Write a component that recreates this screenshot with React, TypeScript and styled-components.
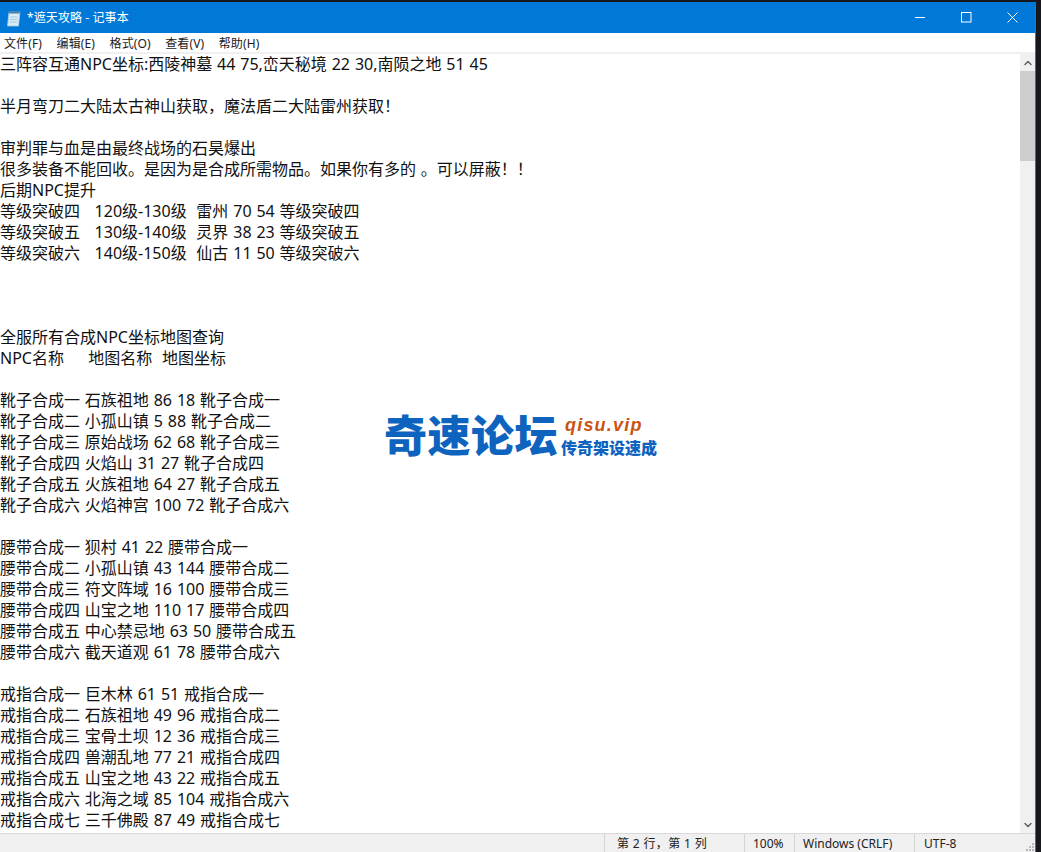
import styled, { createGlobalStyle } from 'styled-components';
import { ChevronUp, ChevronDown } from 'lucide-react';

const GlobalStyle = createGlobalStyle`
  html, body {
    margin: 0;
    height: 100%;
    overflow: hidden;
    background: #17181d;
  }
`;

const Desktop = styled.div`
  width: 1041px;
  height: 852px;
  padding: 2px 5px 0 0;
  box-sizing: border-box;
  font-family: "Noto Sans", "Noto Sans CJK SC", sans-serif;
`;

const Window = styled.div`
  display: flex;
  flex-direction: column;
  height: 100%;
  background: #fff;
  border-right: 1px solid #1a78c8;
`;

const TitleBar = styled.div`
  display: flex;
  align-items: center;
  height: 31px;
  flex: none;
  padding-left: 5px;
  background: #0078d7;
  color: #fff;
`;

const AppIcon = styled.svg`
  width: 17px;
  height: 18px;
  flex: none;
`;

const TitleText = styled.span`
  margin-left: 5px;
  padding-bottom: 2px;
  font-size: 12px;
  letter-spacing: 0.1px;
`;

const WindowControls = styled.div`
  display: flex;
  margin-left: auto;
  height: 100%;
`;

const ControlButton = styled.div`
  display: flex;
  align-items: center;
  justify-content: center;
  width: 46px;
  height: 100%;
`;

const MenuBar = styled.div`
  display: flex;
  align-items: center;
  flex: none;
  gap: 14.5px;
  height: 19px;
  padding-left: 4px;
  font-size: 12px;
  letter-spacing: 0.12px;
  color: #1a1a1a;
  border-bottom: 2px solid #f0f0f0;
`;

const EditorArea = styled.div`
  position: relative;
  display: flex;
  flex: 1;
  min-height: 0;
`;

const TextBody = styled.div`
  flex: 1;
  overflow: hidden;
  font-size: 16px;
  line-height: 21px;
  word-spacing: 0.7px;
  color: #111;
`;

const TextLine = styled.div`
  height: 21px;
  white-space: pre;
`;

const ScrollBar = styled.div`
  display: flex;
  flex-direction: column;
  width: 15px;
  flex: none;
  background: #f0f0f0;
`;

const ScrollArrow = styled.div`
  display: flex;
  align-items: center;
  justify-content: center;
  height: 17px;
  flex: none;
  color: #606060;
`;

const ScrollThumb = styled.div`
  height: 90px;
  flex: none;
  background: #cdcdcd;
`;

const ScrollSpace = styled.div`
  flex: 1;
`;

const Watermark = styled.div`
  position: absolute;
  left: 384px;
  top: 356px;
  display: flex;
  align-items: center;
  gap: 3px;
`;

const WatermarkTitle = styled.div`
  font-family: "Noto Sans CJK SC", sans-serif;
  font-size: 43px;
  line-height: 46px;
  font-weight: 900;
  letter-spacing: 0.5px;
  color: #0d63bd;
`;

const WatermarkSide = styled.div`
  display: flex;
  flex-direction: column;
  gap: 4px;
  padding-top: 4px;
`;

const WatermarkDomain = styled.div`
  padding-left: 4px;
  font-family: "Liberation Sans", sans-serif;
  font-size: 18px;
  line-height: 20px;
  font-weight: 700;
  font-style: italic;
  letter-spacing: 1.2px;
  color: #c9540f;
`;

const WatermarkSlogan = styled.div`
  font-family: "Noto Sans CJK SC", sans-serif;
  font-size: 16px;
  line-height: 17px;
  font-weight: 900;
  color: #0d63bd;
`;

const StatusBar = styled.div`
  display: flex;
  flex: none;
  height: 18px;
  font-size: 12px;
  line-height: 19px;
  color: #222;
  background: #f0f0f0;
  border-top: 1px solid #d9d9d9;
`;

const StatusSpacer = styled.div`
  flex: 1;
`;

const StatusCell = styled.div<{ $width: number; $pad: number }>`
  display: flex;
  width: ${(p) => p.$width}px;
  padding-left: ${(p) => p.$pad}px;
  box-sizing: border-box;
  border-left: 1px solid #d4d4d4;
  white-space: pre;
`;

const PositionText = styled.span`
  letter-spacing: 0.35px;
`;

const ResizeGrip = styled.svg`
  width: 10px;
  height: 10px;
  margin-left: auto;
  margin-top: 8px;
  flex: none;
`;

const lines = [
  '三阵容互通NPC坐标:西陵神墓 44 75,峦天秘境 22 30,南陨之地 51 45',
  '',
  '半月弯刀二大陆太古神山获取，魔法盾二大陆雷州获取！',
  '',
  '审判罪与血是由最终战场的石昊爆出',
  '很多装备不能回收。是因为是合成所需物品。如果你有多的 。可以屏蔽！！',
  '后期NPC提升',
  '等级突破四   120级-130级  雷州 70 54 等级突破四',
  '等级突破五   130级-140级  灵界 38 23 等级突破五',
  '等级突破六   140级-150级  仙古 11 50 等级突破六',
  '',
  '',
  '',
  '全服所有合成NPC坐标地图查询',
  'NPC名称     地图名称  地图坐标',
  '',
  '靴子合成一 石族祖地 86 18 靴子合成一',
  '靴子合成二 小孤山镇 5 88 靴子合成二',
  '靴子合成三 原始战场 62 68 靴子合成三',
  '靴子合成四 火焰山 31 27 靴子合成四',
  '靴子合成五 火族祖地 64 27 靴子合成五',
  '靴子合成六 火焰神宫 100 72 靴子合成六',
  '',
  '腰带合成一 狈村 41 22 腰带合成一',
  '腰带合成二 小孤山镇 43 144 腰带合成二',
  '腰带合成三 符文阵域 16 100 腰带合成三',
  '腰带合成四 山宝之地 110 17 腰带合成四',
  '腰带合成五 中心禁忌地 63 50 腰带合成五',
  '腰带合成六 截天道观 61 78 腰带合成六',
  '',
  '戒指合成一 巨木林 61 51 戒指合成一',
  '戒指合成二 石族祖地 49 96 戒指合成二',
  '戒指合成三 宝骨土坝 12 36 戒指合成三',
  '戒指合成四 兽潮乱地 77 21 戒指合成四',
  '戒指合成五 山宝之地 43 22 戒指合成五',
  '戒指合成六 北海之域 85 104 戒指合成六',
  '戒指合成七 三千佛殿 87 49 戒指合成七',
  '',
];

const menus = ['文件(F)', '编辑(E)', '格式(O)', '查看(V)', '帮助(H)'];

export default function App() {
  return (
    <Desktop>
      <GlobalStyle />
      <Window>
        <TitleBar>
          <AppIcon viewBox="0 0 17 18">
            <path d="M4 3h11l-1.5 14H2.5z" fill="#d9ecf8" stroke="#a5cbe4" strokeWidth="0.8" />
            <path d="M4 2.5h11l-.3 2H3.8z" fill="#4d7da3" />
            <path d="M5 8h7.5M4.7 10.5h7.5M4.4 13h7.5" stroke="#a9c8dd" strokeWidth="1" />
          </AppIcon>
          <TitleText>*遮天攻略 - 记事本</TitleText>
          <WindowControls>
            <ControlButton>
              <svg width="11" height="11" viewBox="0 0 11 11">
                <path d="M0 5.5h10" stroke="#fff" fill="none" />
              </svg>
            </ControlButton>
            <ControlButton>
              <svg width="11" height="11" viewBox="0 0 11 11">
                <rect x="0.5" y="0.5" width="9.5" height="9.5" stroke="#fff" fill="none" />
              </svg>
            </ControlButton>
            <ControlButton>
              <svg width="11" height="11" viewBox="0 0 11 11">
                <path d="M0.5 0.5l10 10M10.5 0.5l-10 10" stroke="#fff" fill="none" />
              </svg>
            </ControlButton>
          </WindowControls>
        </TitleBar>
        <MenuBar>
          {menus.map((m) => (
            <span key={m}>{m}</span>
          ))}
        </MenuBar>
        <EditorArea>
          <TextBody>
            {lines.map((line, i) => (
              <TextLine key={i}>{line}</TextLine>
            ))}
          </TextBody>
          <ScrollBar>
            <ScrollArrow>
              <ChevronUp size={12} strokeWidth={3} />
            </ScrollArrow>
            <ScrollThumb />
            <ScrollSpace />
            <ScrollArrow>
              <ChevronDown size={12} strokeWidth={3} />
            </ScrollArrow>
          </ScrollBar>
          <Watermark>
            <WatermarkTitle>奇速论坛</WatermarkTitle>
            <WatermarkSide>
              <WatermarkDomain>qisu.vip</WatermarkDomain>
              <WatermarkSlogan>传奇架设速成</WatermarkSlogan>
            </WatermarkSide>
          </Watermark>
        </EditorArea>
        <StatusBar>
          <StatusSpacer />
          <StatusCell $width={140} $pad={12}>
            <PositionText>第 2 行，第 1 列</PositionText>
          </StatusCell>
          <StatusCell $width={50} $pad={8}>100%</StatusCell>
          <StatusCell $width={120} $pad={8}>Windows (CRLF)</StatusCell>
          <StatusCell $width={121} $pad={9}>
            UTF-8
            <ResizeGrip viewBox="0 0 10 10">
              <path d="M7 1h2v2H7zM4 4h2v2H4zM7 4h2v2H7zM1 7h2v2H1zM4 7h2v2H4zM7 7h2v2H7z" fill="#b8b8b8" />
            </ResizeGrip>
          </StatusCell>
        </StatusBar>
      </Window>
    </Desktop>
  );
}
